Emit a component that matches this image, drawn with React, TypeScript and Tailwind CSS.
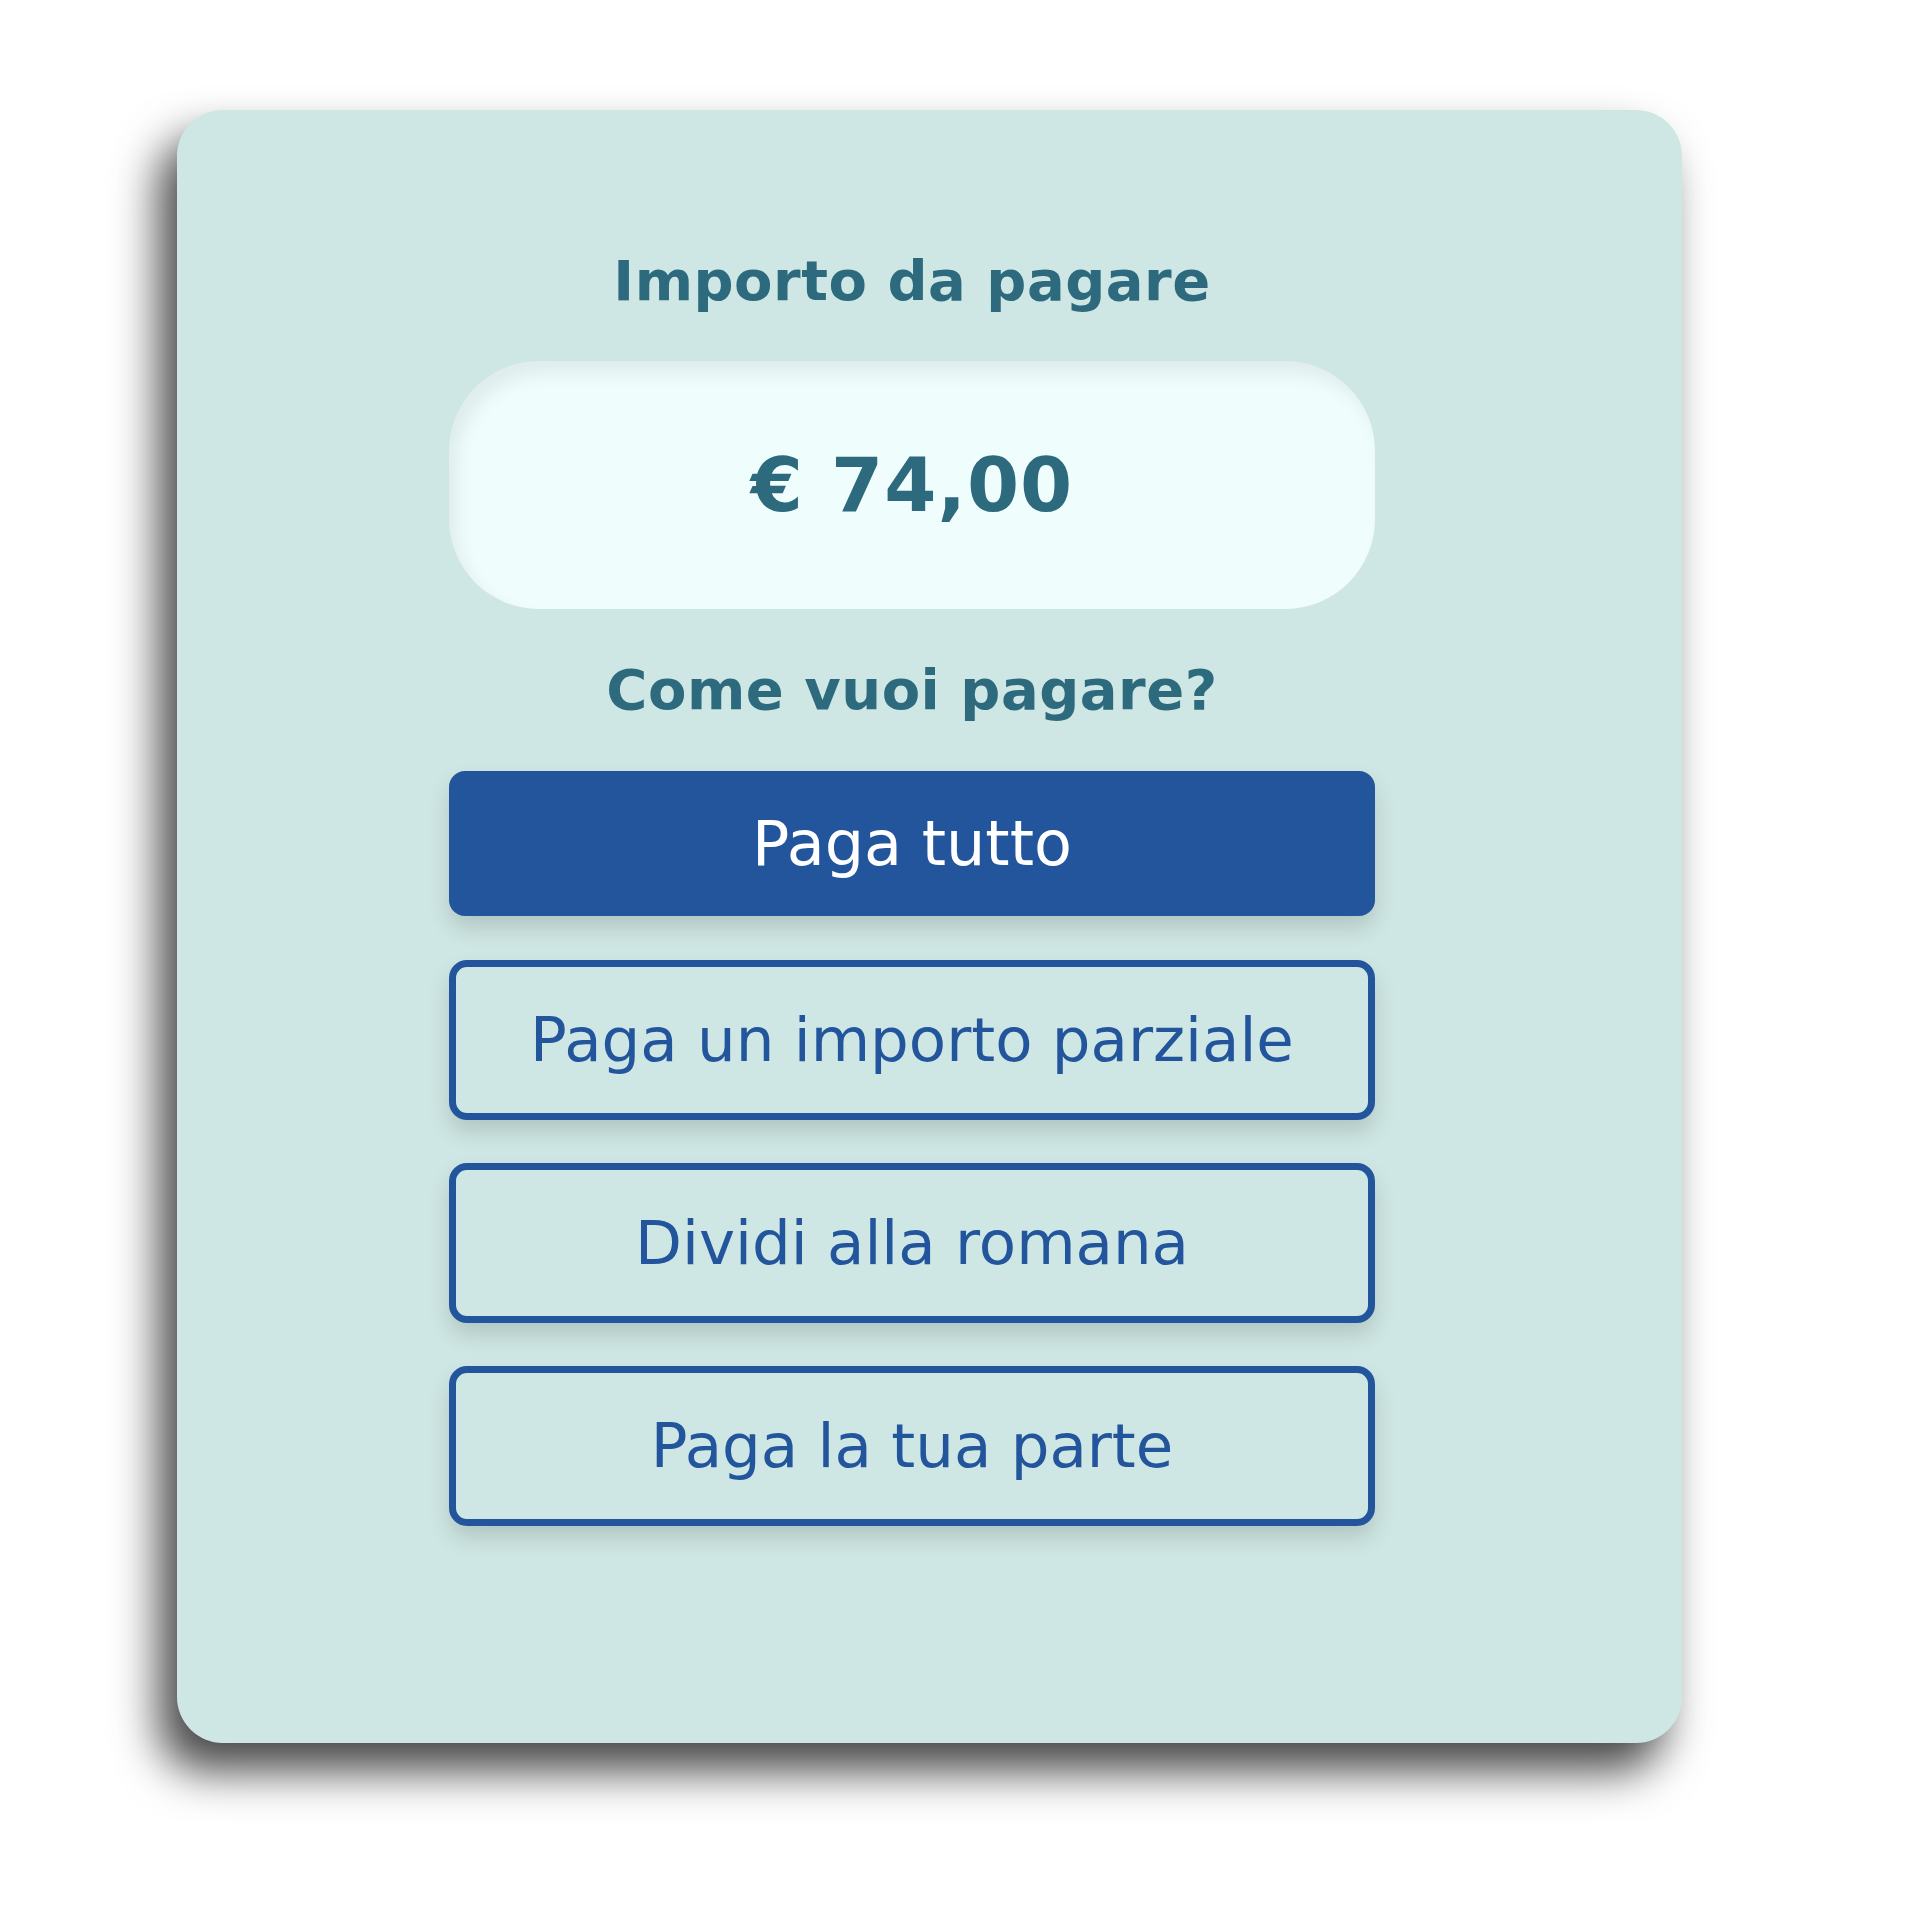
const options = [
  "Paga un importo parziale",
  "Dividi alla romana",
  "Paga la tua parte",
];

export default function App() {
  return (
    <div className="min-h-[1908px] bg-white pt-[110px] pl-[177px] font-['DejaVu_Sans',sans-serif]">
      <div className="w-[1505px] h-[1633px] rounded-[46px] bg-[#cfe7e4] shadow-[-18px_28px_45px_rgba(0,0,0,0.72)]">
        <div className="ml-[272px] w-[926px] flex flex-col items-center pt-[135px]">
          <h2 className="text-[56px] leading-[72px] font-bold text-[#2e6a7e] tracking-[0.5px]">
            Importo da pagare
          </h2>
          <div className="mt-[44px] w-full h-[248px] rounded-[90px] bg-[#effefd] shadow-[inset_8px_12px_18px_rgba(0,0,0,0.07)] flex items-center justify-center">
            <span className="text-[75px] font-bold text-[#2e6a7e] tracking-[1px]">
              € 74,00
            </span>
          </div>
          <h2 className="mt-[45px] text-[56px] leading-[72px] font-bold text-[#2e6a7e] tracking-[0.5px]">
            Come vuoi pagare?
          </h2>
          <button className="mt-[45px] w-full h-[145px] rounded-[16px] bg-[#23559c] text-white text-[62px] shadow-[0_12px_22px_rgba(0,0,0,0.14)]">
            Paga tutto
          </button>
          {options.map((label, i) => (
            <button
              key={label}
              className={
                (i === 0 ? "mt-[44px]" : "mt-[43px]") +
                " w-full h-[160px] rounded-[18px] border-[7px] border-[#23559c] text-[#23559c] text-[61px] shadow-[0_12px_22px_rgba(0,0,0,0.14)]"
              }
            >
              {label}
            </button>
          ))}
        </div>
      </div>
    </div>
  );
}
